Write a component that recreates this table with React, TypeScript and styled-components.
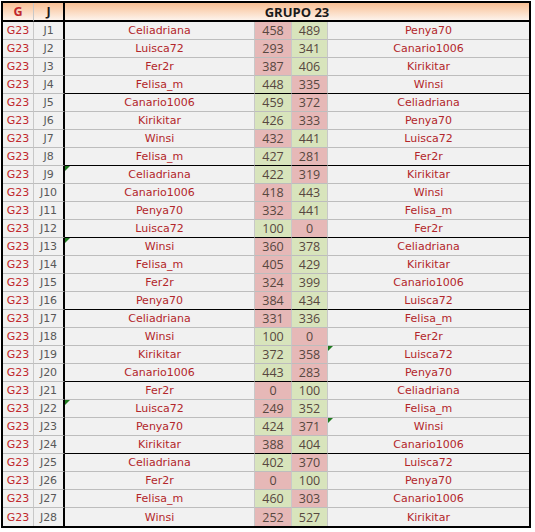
import React from 'react';
import styled, { createGlobalStyle, css } from 'styled-components';

type Match = {
  j: number;
  home: string;
  a: number;
  b: number;
  away: string;
  flagHome?: boolean;
  flagAway?: boolean;
};

const matches: Match[] = [
  { j: 1, home: 'Celiadriana', a: 458, b: 489, away: 'Penya70' },
  { j: 2, home: 'Luisca72', a: 293, b: 341, away: 'Canario1006' },
  { j: 3, home: 'Fer2r', a: 387, b: 406, away: 'Kirikitar' },
  { j: 4, home: 'Felisa_m', a: 448, b: 335, away: 'Winsi' },
  { j: 5, home: 'Canario1006', a: 459, b: 372, away: 'Celiadriana' },
  { j: 6, home: 'Kirikitar', a: 426, b: 333, away: 'Penya70' },
  { j: 7, home: 'Winsi', a: 432, b: 441, away: 'Luisca72' },
  { j: 8, home: 'Felisa_m', a: 427, b: 281, away: 'Fer2r' },
  { j: 9, home: 'Celiadriana', a: 422, b: 319, away: 'Kirikitar', flagHome: true },
  { j: 10, home: 'Canario1006', a: 418, b: 443, away: 'Winsi' },
  { j: 11, home: 'Penya70', a: 332, b: 441, away: 'Felisa_m' },
  { j: 12, home: 'Luisca72', a: 100, b: 0, away: 'Fer2r' },
  { j: 13, home: 'Winsi', a: 360, b: 378, away: 'Celiadriana', flagHome: true },
  { j: 14, home: 'Felisa_m', a: 405, b: 429, away: 'Kirikitar' },
  { j: 15, home: 'Fer2r', a: 324, b: 399, away: 'Canario1006' },
  { j: 16, home: 'Penya70', a: 384, b: 434, away: 'Luisca72' },
  { j: 17, home: 'Celiadriana', a: 331, b: 336, away: 'Felisa_m' },
  { j: 18, home: 'Winsi', a: 100, b: 0, away: 'Fer2r' },
  { j: 19, home: 'Kirikitar', a: 372, b: 358, away: 'Luisca72', flagAway: true },
  { j: 20, home: 'Canario1006', a: 443, b: 283, away: 'Penya70' },
  { j: 21, home: 'Fer2r', a: 0, b: 100, away: 'Celiadriana' },
  { j: 22, home: 'Luisca72', a: 249, b: 352, away: 'Felisa_m', flagHome: true },
  { j: 23, home: 'Penya70', a: 424, b: 371, away: 'Winsi', flagAway: true },
  { j: 24, home: 'Kirikitar', a: 388, b: 404, away: 'Canario1006' },
  { j: 25, home: 'Celiadriana', a: 402, b: 370, away: 'Luisca72' },
  { j: 26, home: 'Fer2r', a: 0, b: 100, away: 'Penya70' },
  { j: 27, home: 'Felisa_m', a: 460, b: 303, away: 'Canario1006' },
  { j: 28, home: 'Winsi', a: 252, b: 527, away: 'Kirikitar' },
];

const App = () => {
  return (
    <>
      <GlobalStyle />
      <Sheet>
        <HeadCell color="#c0282d">G</HeadCell>
        <HeadCell color="#1a1a1a" thickRight>
          J
        </HeadCell>
        <GroupTitle>GRUPO 23</GroupTitle>
        {matches.map((m, i) => {
          const last = i === matches.length - 1;
          const groupEnd = !last && (i + 1) % 4 === 0;
          return (
            <React.Fragment key={m.j}>
              <CodeCell last={last}>G23</CodeCell>
              <RoundCell last={last}>J{m.j}</RoundCell>
              <NameCell last={last} groupEnd={groupEnd} flag={m.flagHome}>
                {m.home}
              </NameCell>
              <ScoreCell last={last} groupEnd={groupEnd} win={m.a > m.b}>
                {m.a}
              </ScoreCell>
              <ScoreCell last={last} groupEnd={groupEnd} win={m.b > m.a}>
                {m.b}
              </ScoreCell>
              <NameCell last={last} groupEnd={groupEnd} flag={m.flagAway} noRight>
                {m.away}
              </NameCell>
            </React.Fragment>
          );
        })}
      </Sheet>
    </>
  );
};

export default App;

const GlobalStyle = createGlobalStyle`
  body {
    margin: 0;
    background: #fff;
  }
`;

const Sheet = styled.div`
  display: grid;
  grid-template-columns: 31px 31px 190px 37px 36px 201px;
  grid-template-rows: 19px;
  grid-auto-rows: 18px;
  width: max-content;
  margin: 1px 0 0 1px;
  border: 2px solid #000;
`;

const header = css`
  display: flex;
  align-items: center;
  justify-content: center;
  box-sizing: border-box;
  border-bottom: 2px solid #000;
  background: linear-gradient(to bottom, #f8bf94 0%, #fbd9bf 50%, #fdf3ec 100%);
  font-family: 'Open Sans', 'Liberation Sans', sans-serif;
  font-weight: 700;
  font-size: 12.5px;
`;

const HeadCell = styled.div<{ color: string; thickRight?: boolean }>`
  ${header};
  color: ${({ color }) => color};
  border-right: ${({ thickRight }) => (thickRight ? '2px solid #000' : '1px solid #c8c8c8')};
`;

const GroupTitle = styled.div`
  ${header};
  grid-column: 3 / span 4;
  color: #1a1a1a;
  font-size: 13px;
`;

type CellProps = { last?: boolean; groupEnd?: boolean };

const cell = css<CellProps>`
  position: relative;
  display: flex;
  align-items: center;
  justify-content: center;
  box-sizing: border-box;
  border-bottom: ${({ last, groupEnd }) =>
    last ? 'none' : groupEnd ? '1px solid #000' : '1px solid #bdbdbd'};
  background: #f1f1f1;
  font-family: 'DejaVu Sans', Verdana, sans-serif;
  font-size: 11px;
  white-space: nowrap;
`;

const CodeCell = styled.div<CellProps>`
  ${cell};
  border-bottom: ${({ last }) => (last ? 'none' : '1px solid #bdbdbd')};
  border-right: 1px solid #c8c8c8;
  color: #c0282d;
`;

const RoundCell = styled.div<CellProps>`
  ${cell};
  border-bottom: ${({ last }) => (last ? 'none' : '1px solid #bdbdbd')};
  border-right: 2px solid #000;
  color: #595959;
`;

const NameCell = styled.div<CellProps & { flag?: boolean; noRight?: boolean }>`
  ${cell};
  border-right: ${({ noRight }) => (noRight ? 'none' : '1px solid #c8c8c8')};
  color: #b3262a;

  ${({ flag }) =>
    flag &&
    css`
      &::before {
        content: '';
        position: absolute;
        top: 0;
        left: 0;
        border-style: solid;
        border-width: 5px 5px 0 0;
        border-color: #1f7a1f transparent transparent transparent;
      }
    `}
`;

const ScoreCell = styled.div<CellProps & { win: boolean }>`
  ${cell};
  border-right: 1px solid #c8c8c8;
  background: ${({ win }) => (win ? '#d8e4bc' : '#e6b8b7')};
  color: #574740;
  font-family: 'Open Sans', 'Liberation Sans', sans-serif;
  font-size: 12.5px;
`;
